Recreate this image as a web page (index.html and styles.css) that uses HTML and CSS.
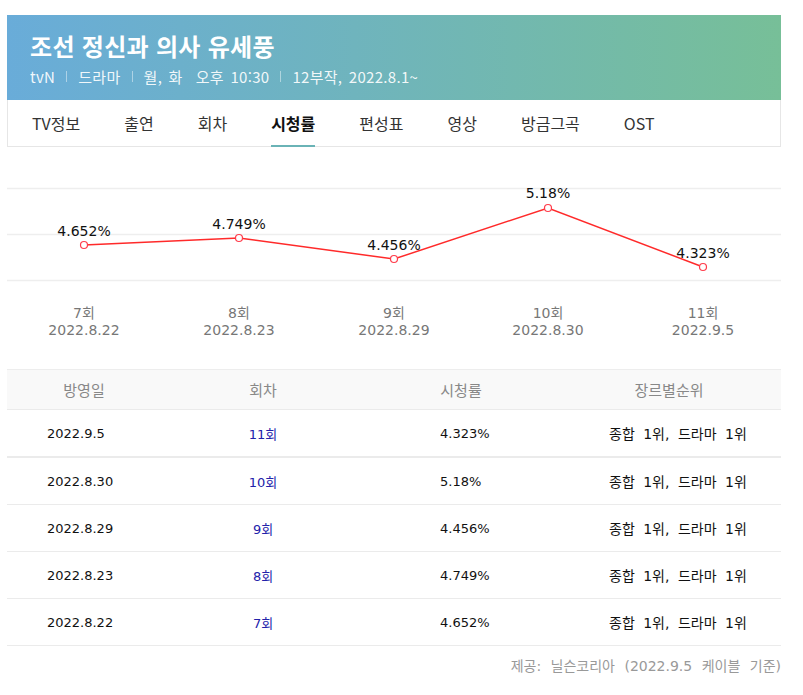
FILE: index.html
```html
<!DOCTYPE html>
<html lang="ko">
<head>
<meta charset="utf-8">
<title>조선 정신과 의사 유세풍 - 시청률</title>
<link rel="stylesheet" href="styles.css">
</head>
<body>
<div class="page">
  <header class="hero">
    <h1 class="title">조선 정신과 의사 유세풍</h1>
    <div class="meta">
      <span>tvN</span><i class="sep"></i>
      <span>드라마</span><i class="sep"></i>
      <span>월, 화&nbsp; 오후 10:30</span><i class="sep"></i>
      <span>12부작, 2022.8.1~</span>
    </div>
  </header>
  <nav class="tabs">
    <a class="tab">TV정보</a>
    <a class="tab">출연</a>
    <a class="tab">회차</a>
    <a class="tab active">시청률</a>
    <a class="tab">편성표</a>
    <a class="tab">영상</a>
    <a class="tab">방금그곡</a>
    <a class="tab">OST</a>
  </nav>
  <svg class="chart" width="774" height="222" viewBox="0 0 774 222">
    <g class="grid">
      <line x1="0" y1="41.5" x2="774" y2="41.5"/>
      <line x1="0" y1="87.5" x2="774" y2="87.5"/>
      <line x1="0" y1="133.5" x2="774" y2="133.5"/>
    </g>
    <polyline class="line" points="77,98 232,91 387,112 541,61 696,120"/>
    <g class="dots">
      <circle cx="77" cy="98" r="3.5"/>
      <circle cx="232" cy="91" r="3.5"/>
      <circle cx="387" cy="112" r="3.5"/>
      <circle cx="541" cy="61" r="3.5"/>
      <circle cx="696" cy="120" r="3.5"/>
    </g>
    <g class="vals">
      <text x="77" y="89">4.652%</text>
      <text x="232" y="82">4.749%</text>
      <text x="387" y="103">4.456%</text>
      <text x="541" y="51">5.18%</text>
      <text x="696" y="111">4.323%</text>
    </g>
    <g class="axis">
      <text x="77" y="171">7회</text><text x="77" y="188">2022.8.22</text>
      <text x="232" y="171">8회</text><text x="232" y="188">2022.8.23</text>
      <text x="387" y="171">9회</text><text x="387" y="188">2022.8.29</text>
      <text x="541" y="171">10회</text><text x="541" y="188">2022.8.30</text>
      <text x="696" y="171">11회</text><text x="696" y="188">2022.9.5</text>
    </g>
  </svg>
  <div class="table">
    <div class="row head">
      <div>방영일</div><div>회차</div><div>시청률</div><div>장르별순위</div>
    </div>
    <div class="row first">
      <div class="c1">2022.9.5</div><div class="c2">11회</div><div class="c3">4.323%</div><div class="c4">종합 1위, 드라마 1위</div>
    </div>
    <div class="row">
      <div class="c1">2022.8.30</div><div class="c2">10회</div><div class="c3">5.18%</div><div class="c4">종합 1위, 드라마 1위</div>
    </div>
    <div class="row">
      <div class="c1">2022.8.29</div><div class="c2">9회</div><div class="c3">4.456%</div><div class="c4">종합 1위, 드라마 1위</div>
    </div>
    <div class="row">
      <div class="c1">2022.8.23</div><div class="c2">8회</div><div class="c3">4.749%</div><div class="c4">종합 1위, 드라마 1위</div>
    </div>
    <div class="row">
      <div class="c1">2022.8.22</div><div class="c2">7회</div><div class="c3">4.652%</div><div class="c4">종합 1위, 드라마 1위</div>
    </div>
  </div>
  <p class="source">제공: 닐슨코리아 (2022.9.5 케이블 기준)</p>
</div>
</body>
</html>
```

FILE: styles.css
```css
* { box-sizing: border-box; }
html, body { margin: 0; padding: 0; background: #fff; }
body { font-family: "Noto Sans CJK KR", "Noto Sans", sans-serif; color: #333; }

.page { width: 774px; margin: 15px 0 0 7px; }

.hero {
  height: 85px;
  padding: 17px 23px 0;
  background: linear-gradient(to right, #69acd9 0%, #6fb4bd 45%, #77bf98 100%);
  color: #fff;
}
.title {
  margin: 0;
  font-size: 24px;
  line-height: 28px;
  font-weight: 700;
  letter-spacing: 0.3px;
}
.meta {
  display: flex;
  align-items: center;
  margin-top: 6px;
  height: 20px;
  font-size: 15px;
  word-spacing: 2px;
  letter-spacing: 0.3px;
  color: rgba(255,255,255,0.92);
}
.sep {
  display: inline-block;
  width: 1px;
  height: 11px;
  margin: 0 11px;
  background: rgba(255,255,255,0.45);
}

.tabs {
  display: flex;
  gap: 44px;
  height: 47px;
  padding-left: 24px;
  border: 1px solid #e6e6e6;
  border-top: 0;
}
.tab {
  position: relative;
  font-size: 16px;
  line-height: 46px;
  color: #333;
}
.tab.active { font-weight: 700; color: #111; }
.tab.active::after {
  content: "";
  position: absolute;
  left: 0; right: 0; bottom: -1px;
  height: 2px;
  background: #6ab3b6;
}

.chart { display: block; }
.grid line { stroke: #eeeeee; stroke-width: 1.5; }
.line { fill: none; stroke: #ff2a2a; stroke-width: 1.5; }
.dots circle { fill: #fff; stroke: #ff3b4a; stroke-width: 1.2; }
.vals text { font-family: "DejaVu Sans", sans-serif; font-size: 14px; fill: #111; text-anchor: middle; }
.axis text { font-family: "DejaVu Sans", "Noto Sans CJK KR", sans-serif; font-size: 14px; fill: #777; text-anchor: middle; }

.table { font-family: "DejaVu Sans", "Noto Sans CJK KR", sans-serif; font-size: 13px; color: #111; }
.row {
  display: grid;
  grid-template-columns: 154px 204px 192px 224px;
  align-items: center;
  height: 47px;
  border-bottom: 1px solid #ebebeb;
}
.row.head {
  height: 41px;
  background: #f9f9f9;
  border-top: 1px solid #ededed;
  border-bottom: 1px solid #ebebeb;
  font-family: "Noto Sans CJK KR", sans-serif;
  font-size: 15px;
  color: #888;
  text-align: center;
}
.row.first { height: 48px; border-bottom-width: 2px; }
.c1 { padding-left: 40px; }
.c2 { text-align: center; color: #2222aa; }
.c3 { padding-left: 75px; }
.c4 { padding-left: 52px; font-size: 14px; word-spacing: 4px; }

.source {
  margin: 0;
  padding-top: 10px;
  line-height: 20px;
  text-align: right;
  font-family: "DejaVu Sans", "Noto Sans CJK KR", sans-serif;
  font-size: 14px;
  word-spacing: 5px;
  color: #999;
}
```
